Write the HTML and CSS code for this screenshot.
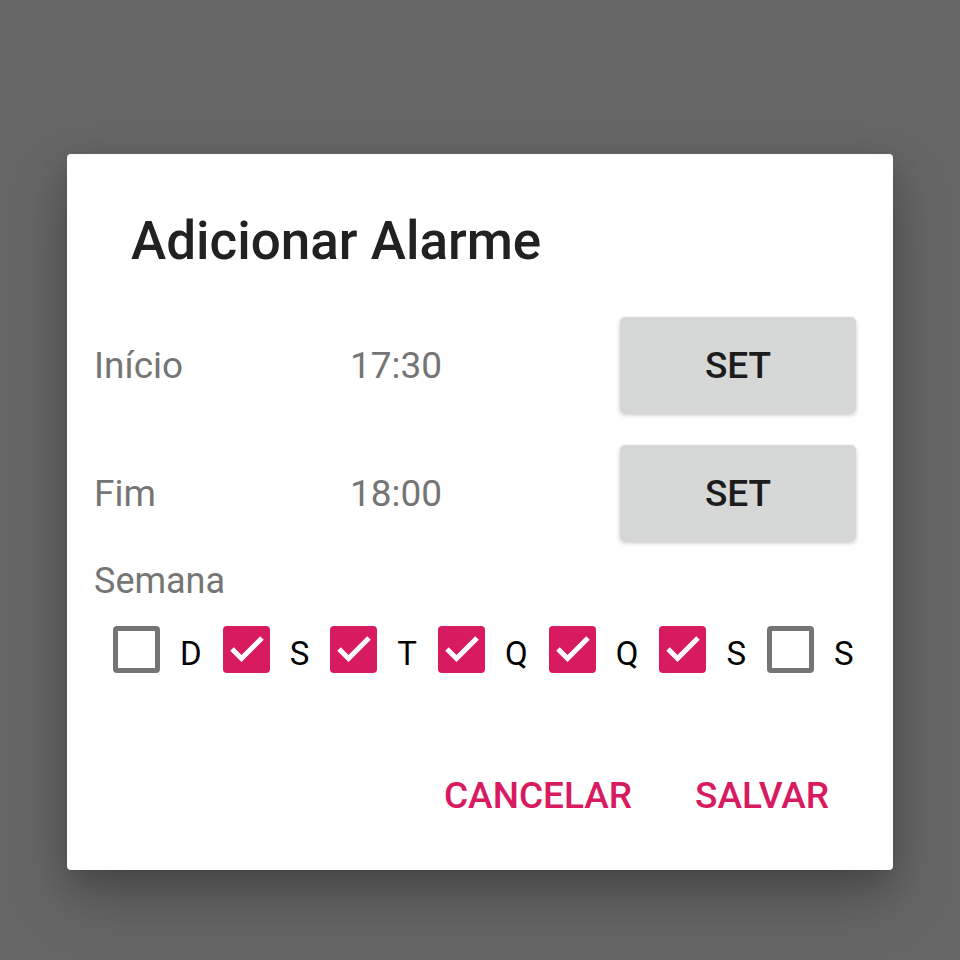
FILE: index.html
```html
<!DOCTYPE html>
<html lang="pt">
<head>
<meta charset="utf-8">
<title>Adicionar Alarme</title>
<link rel="stylesheet" href="styles.css">
</head>
<body>
<div class="dialog">
  <h1 class="title">Adicionar Alarme</h1>
  <div class="time-row">
    <span class="label">Início</span>
    <span class="value">17:30</span>
    <button class="set-btn">SET</button>
  </div>
  <div class="time-row">
    <span class="label">Fim</span>
    <span class="value">18:00</span>
    <button class="set-btn">SET</button>
  </div>
  <div class="week-label">Semana</div>
  <div class="days">
    <label class="day"><span class="box"></span><span class="letter">D</span></label>
    <label class="day"><span class="box checked"><svg viewBox="0 0 47 47"><path d="M9 23 L18.5 32.5 L39 12" /></svg></span><span class="letter">S</span></label>
    <label class="day"><span class="box checked"><svg viewBox="0 0 47 47"><path d="M9 23 L18.5 32.5 L39 12" /></svg></span><span class="letter">T</span></label>
    <label class="day"><span class="box checked"><svg viewBox="0 0 47 47"><path d="M9 23 L18.5 32.5 L39 12" /></svg></span><span class="letter">Q</span></label>
    <label class="day"><span class="box checked"><svg viewBox="0 0 47 47"><path d="M9 23 L18.5 32.5 L39 12" /></svg></span><span class="letter">Q</span></label>
    <label class="day"><span class="box checked"><svg viewBox="0 0 47 47"><path d="M9 23 L18.5 32.5 L39 12" /></svg></span><span class="letter">S</span></label>
    <label class="day"><span class="box"></span><span class="letter">S</span></label>
  </div>
  <div class="actions">
    <button class="text-btn">CANCELAR</button>
    <button class="text-btn">SALVAR</button>
  </div>
</div>
</body>
</html>
```

FILE: styles.css
```css
html, body {
  margin: 0;
  padding: 0;
}
body {
  background: #666666;
  font-family: Roboto, "Noto Sans", sans-serif;
  width: 960px;
  height: 960px;
  overflow: hidden;
}
.dialog {
  margin: 154px 0 0 67px;
  width: 826px;
  background: #ffffff;
  border-radius: 4px;
  box-shadow: 0 30px 60px rgba(0, 0, 0, 0.22), 0 10px 30px rgba(0, 0, 0, 0.16);
  padding-bottom: 56px;
}
.title {
  margin: 0 0 0 64px;
  padding-top: 61px;
  font-size: 53px;
  line-height: 53px;
  font-weight: 500;
  color: #212121;
}
.time-row {
  display: flex;
  align-items: center;
  height: 128px;
  padding: 0 37px 0 27px;
}
.title + .time-row {
  margin-top: 33px;
}
.label {
  width: 256px;
  font-size: 37px;
  line-height: 37px;
  color: #757575;
}
.value {
  font-size: 37px;
  line-height: 37px;
  color: #757575;
}
.set-btn {
  margin-left: auto;
  width: 236px;
  height: 96px;
  border: none;
  border-radius: 5px;
  background: #d6d7d7;
  box-shadow: 0 2px 4px rgba(0, 0, 0, 0.22);
  font-family: Roboto, sans-serif;
  font-weight: 500;
  font-size: 37px;
  color: #1c1c1c;
  padding: 0;
}
.week-label {
  margin: 6px 0 0 27px;
  font-size: 36px;
  line-height: 36px;
  color: #757575;
}
.days {
  display: flex;
  align-items: center;
  margin-top: 27px;
  padding-left: 46px;
  height: 47px;
}
.day {
  display: flex;
  align-items: center;
  margin-right: 21px;
}
.box {
  box-sizing: border-box;
  width: 47px;
  height: 47px;
  border: 5px solid #757575;
  border-radius: 4px;
  background: #fff;
}
.box.checked {
  border: none;
  background: #d81b60;
}
.box svg {
  display: block;
  width: 47px;
  height: 47px;
}
.box svg path {
  fill: none;
  stroke: #ffffff;
  stroke-width: 5;
}
.letter {
  margin-left: 20px;
  padding-top: 7px;
  font-size: 33px;
  line-height: 33px;
  color: #000;
}
.actions {
  display: flex;
  justify-content: flex-end;
  margin-top: 104px;
  padding-right: 64px;
}
.text-btn {
  border: none;
  background: none;
  padding: 0;
  font-family: Roboto, sans-serif;
  font-weight: 500;
  font-size: 37px;
  line-height: 37px;
  color: #d81b60;
}
.text-btn + .text-btn {
  margin-left: 63px;
}
```
